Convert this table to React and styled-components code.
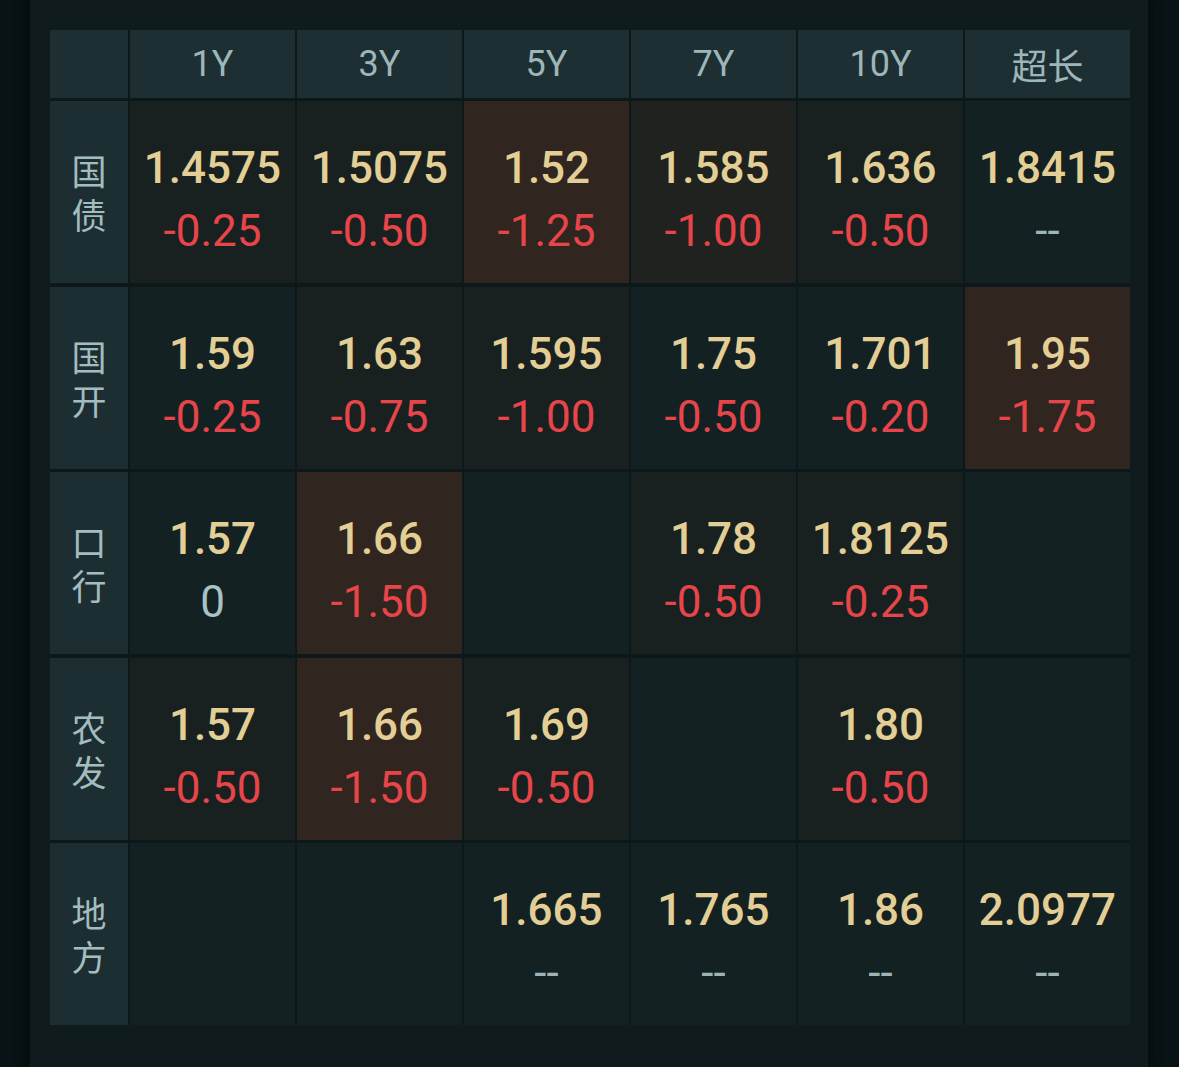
import React from "react";
import styled, { createGlobalStyle } from "styled-components";

const GlobalStyle = createGlobalStyle`
  html, body {
    margin: 0;
    padding: 0;
    background: #081315;
  }
  body {
    font-family: Roboto, "Noto Sans CJK SC", sans-serif;
  }
`;

const TINTS = ["#142123", "#182120", "#1f221f", "#30251f"];

const TERMS = ["1Y", "3Y", "5Y", "7Y", "10Y", "超长"];

// each cell: [yield, change, tint level]
const ROWS = [
  {
    name: "国债",
    cells: [
      ["1.4575", "-0.25", 1],
      ["1.5075", "-0.50", 1],
      ["1.52", "-1.25", 3],
      ["1.585", "-1.00", 2],
      ["1.636", "-0.50", 1],
      ["1.8415", "--", 0],
    ],
  },
  {
    name: "国开",
    cells: [
      ["1.59", "-0.25", 0],
      ["1.63", "-0.75", 1],
      ["1.595", "-1.00", 1],
      ["1.75", "-0.50", 0],
      ["1.701", "-0.20", 0],
      ["1.95", "-1.75", 3],
    ],
  },
  {
    name: "口行",
    cells: [
      ["1.57", "0", 0],
      ["1.66", "-1.50", 3],
      null,
      ["1.78", "-0.50", 1],
      ["1.8125", "-0.25", 1],
      null,
    ],
  },
  {
    name: "农发",
    cells: [
      ["1.57", "-0.50", 1],
      ["1.66", "-1.50", 3],
      ["1.69", "-0.50", 1],
      null,
      ["1.80", "-0.50", 1],
      null,
    ],
  },
  {
    name: "地方",
    cells: [
      null,
      null,
      ["1.665", "--", 0],
      ["1.765", "--", 0],
      ["1.86", "--", 0],
      ["2.0977", "--", 0],
    ],
  },
];

const Page = styled.div`
  min-height: 1067px;
  display: flex;
`;

const Panel = styled.div`
  margin-left: 30px;
  width: 1118px;
  box-sizing: border-box;
  padding: 30px 18px 0 20px;
  background: #0f1b1d;
  box-shadow: -6px 0 8px rgba(4, 10, 11, 0.6), 4px 0 8px rgba(4, 10, 11, 0.5);
`;

const Grid = styled.div`
  display: grid;
  grid-template-columns: 78px repeat(6, 165px);
  grid-template-rows: 68px repeat(5, 182px);
  column-gap: 2px;
  row-gap: 3.4px;
  background: #0d181a;
  width: 1080px;
`;

const HeadCell = styled.div`
  background: #1e2f33;
  display: flex;
  align-items: center;
  justify-content: center;
  color: #9db6b9;
  font-size: 36px;
  font-family: Roboto, "Noto Sans CJK SC", sans-serif;
`;

const RowHead = styled.div`
  background: #1d2e32;
  display: flex;
  align-items: center;
  justify-content: center;
  text-align: center;
  color: #a3bcbf;
  font-size: 35px;
  line-height: 44px;
  font-family: "Noto Sans CJK SC", sans-serif;
`;

const Cell = styled.div`
  background: ${(p) => TINTS[p.$tint]};
  display: flex;
  flex-direction: column;
  align-items: center;
  justify-content: center;
  box-sizing: border-box;
  padding-top: 16px;
  line-height: 63px;
  font-size: 44px;
`;

const Yield = styled.span`
  color: #e3ce95;
  font-weight: 500;
`;

const Change = styled.span`
  color: ${(p) => (p.$kind === "down" ? "#e8454b" : p.$kind === "flat" ? "#a8c3c7" : "#9fb4b7")};
  font-weight: 400;
`;

const kindOf = (chg) => {
  if (chg === "--") return "none";
  if (chg.startsWith("-")) return "down";
  return "flat";
};

export default () => {
  return (
    <>
      <GlobalStyle />
      <Page>
        <Panel>
          <Grid>
            <HeadCell />
            {TERMS.map((t) => (
              <HeadCell key={t}>{t}</HeadCell>
            ))}
            {ROWS.map((row) => (
              <React.Fragment key={row.name}>
                <RowHead>
                  <div>
                    {row.name[0]}
                    <br />
                    {row.name[1]}
                  </div>
                </RowHead>
                {row.cells.map((cell, i) =>
                  cell ? (
                    <Cell key={i} $tint={cell[2]}>
                      <Yield>{cell[0]}</Yield>
                      <Change $kind={kindOf(cell[1])}>{cell[1]}</Change>
                    </Cell>
                  ) : (
                    <Cell key={i} $tint={0} />
                  )
                )}
              </React.Fragment>
            ))}
          </Grid>
        </Panel>
      </Page>
    </>
  );
};
